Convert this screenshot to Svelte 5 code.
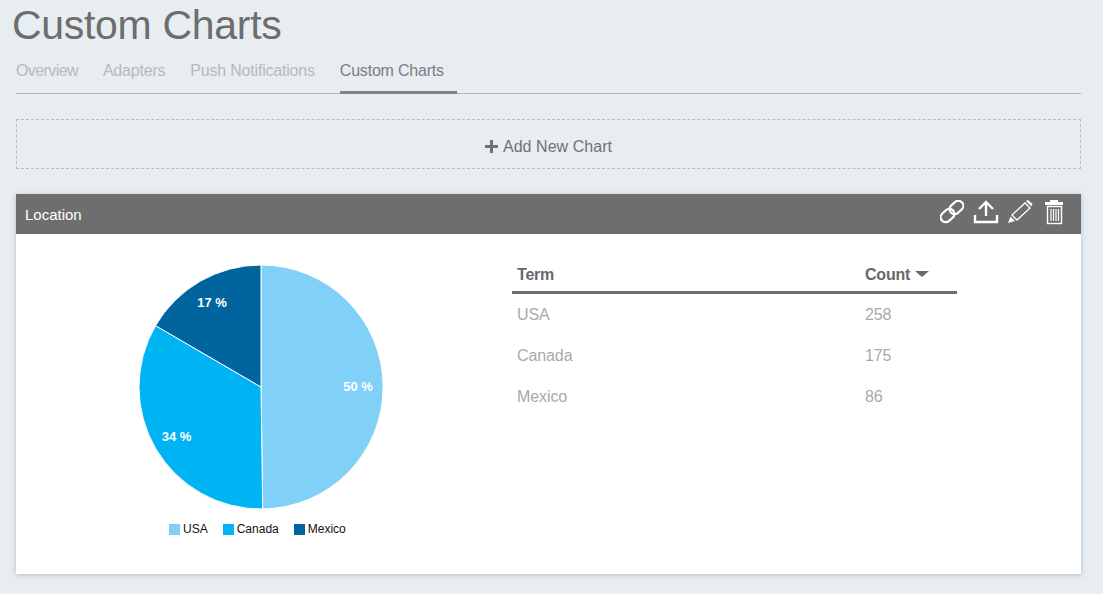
<script lang="ts">
	const tabs = ['Overview', 'Adapters', 'Push Notifications', 'Custom Charts'];
	const activeTab = 'Custom Charts';

	const rows = [
		{ term: 'USA', count: 258, color: '#81d0f7' },
		{ term: 'Canada', count: 175, color: '#00b3f2' },
		{ term: 'Mexico', count: 86, color: '#00649f' }
	];

	// pie centre and radius inside the svg
	const cx = 124;
	const cy = 124;
	const r = 122;

	function point(deg: number, radius = r) {
		const a = ((deg - 90) * Math.PI) / 180;
		return `${(cx + radius * Math.cos(a)).toFixed(2)} ${(cy + radius * Math.sin(a)).toFixed(2)}`;
	}

	const slices = [
		{ color: rows[0].color, from: 0, to: 179.2 },
		{ color: rows[1].color, from: 179.2, to: 300.2 },
		{ color: rows[2].color, from: 300.2, to: 360 }
	].map((s) => ({
		color: s.color,
		d: `M${cx} ${cy} L${point(s.from)} A${r} ${r} 0 ${s.to - s.from > 180 ? 1 : 0} 1 ${point(s.to)} Z`
	}));
</script>

<div class="page">
	<h1>Custom Charts</h1>

	<nav class="tabs">
		{#each tabs as tab}
			<span class="tab" class:active={tab === activeTab}>{tab}</span>
		{/each}
	</nav>

	<div class="add-chart">
		<svg class="plus" viewBox="0 0 13 13"><path d="M5 0h3v5h5v3H8v5H5V8H0V5h5z" /></svg>
		Add New Chart
	</div>

	<section class="card">
		<header class="card-head">
			<span class="card-title">Location</span>
			<div class="actions">
				<svg width="24" height="26" viewBox="0 0 24 26" fill="none" stroke="#fff" stroke-width="2.2">
					<g transform="rotate(-42 12 11.5)">
						<rect x="10.5" y="6.5" width="15" height="10" rx="5" />
						<rect x="-1.5" y="6.5" width="15" height="10" rx="5" />
					</g>
				</svg>
				<svg width="26" height="26" viewBox="0 0 26 26" fill="none" stroke="#fff" stroke-width="2.4">
					<path d="M13 16V2M6 9l7-7 7 7" />
					<path d="M2 15v7h22v-7" />
				</svg>
				<svg width="26" height="26" viewBox="0 0 26 26" fill="none" stroke="#fff" stroke-width="1.3">
					<path d="M4 15L17 3l5 5L9 20z" />
					<path d="M0 23l2.5-6.5L7 21z" fill="#fff" stroke="none" />
					<path d="M18 1l2-1 4.5 4-1 2.5z" fill="#fff" stroke="none" />
				</svg>
				<svg width="22" height="26" viewBox="0 0 22 26" fill="none" stroke="#fff">
					<path d="M7 1h8" stroke-width="2" />
					<path d="M2 3.5h18" stroke-width="3" />
					<rect x="4.5" y="6.5" width="14" height="17" stroke-width="1.4" />
					<path d="M8 9v12M10.5 9v12M13 9v12M15.5 9v12" stroke-width="1.2" />
				</svg>
			</div>
		</header>

		<div class="card-body">
			<div class="chart">
				<svg class="pie" width="248" height="248" viewBox="0 0 248 248">
					{#each slices as s}
						<path d={s.d} fill={s.color} stroke="#fff" stroke-width="1" />
					{/each}
					<text x="221" y="128">50 %</text>
					<text x="39.5" y="178">34 %</text>
					<text x="75" y="44">17 %</text>
				</svg>
				<div class="legend">
					{#each rows as row}
						<span class="legend-item"><i style="background:{row.color}"></i>{row.term}</span>
					{/each}
				</div>
			</div>

			<table>
				<thead>
					<tr>
						<th>Term</th>
						<th class="count">Count <span class="caret"></span></th>
					</tr>
				</thead>
				<tbody>
					{#each rows as row}
						<tr>
							<td>{row.term}</td>
							<td class="count">{row.count}</td>
						</tr>
					{/each}
				</tbody>
			</table>
		</div>
	</section>
</div>

<style>
	:global(body) {
		margin: 0;
		background: #e8edf2;
	}

	.page {
		height: 594px;
		box-sizing: border-box;
		overflow: hidden;
		padding: 0 22px 0 16px;
		font-family: "Liberation Sans", Arial, sans-serif;
	}

	h1 {
		margin: 0 0 0 -4px;
		height: 51px;
		font-size: 41px;
		line-height: 50px;
		font-weight: 400;
		color: #6d6d6d;
		letter-spacing: -0.3px;
	}

	.tabs {
		display: flex;
		gap: 25px;
		height: 43px;
		box-sizing: border-box;
		border-bottom: 1px solid #b4b6ba;
	}

	.tab {
		height: 42px;
		box-sizing: border-box;
		padding-top: 10px;
		font-size: 16px;
		line-height: 19px;
		color: #b7b9bd;
		letter-spacing: -0.2px;
	}

	.tab:first-child {
		letter-spacing: -0.6px;
	}

	.tab.active {
		height: 43px;
		padding-right: 13px;
		color: #7a7c82;
		border-bottom: 3px solid #808286;
	}

	.add-chart {
		display: flex;
		align-items: center;
		justify-content: center;
		gap: 5px;
		height: 50px;
		box-sizing: border-box;
		margin-top: 25px;
		padding-top: 5px;
		border: 1px dashed #b9bcc0;
		font-size: 16px;
		color: #6f7278;
		letter-spacing: 0.05px;
	}

	.plus {
		width: 13px;
		height: 13px;
		fill: #6f7278;
	}

	.card {
		margin-top: 25px;
		height: 380px;
		background: #fff;
		box-shadow: 0 1px 5px rgba(90, 100, 110, 0.35);
	}

	.card-head {
		display: flex;
		align-items: center;
		justify-content: space-between;
		height: 40px;
		padding: 0 16px 0 9px;
		background: #6e6e6e;
	}

	.card-title {
		font-size: 15px;
		color: #fff;
	}

	.actions {
		display: flex;
		align-items: flex-start;
		gap: 9px;
		margin-bottom: 2px;
	}

	.card-body {
		display: flex;
		align-items: flex-start;
	}

	.chart {
		width: 248px;
		margin: 29px 0 0 121px;
	}

	.pie {
		display: block;
	}

	.pie text {
		font-size: 13px;
		font-weight: 700;
		fill: #fff;
		text-anchor: middle;
	}

	.legend {
		display: flex;
		gap: 15px;
		margin-top: 11px;
		padding-left: 32px;
		font-size: 12px;
		line-height: 14px;
		color: #111;
	}

	.legend-item {
		display: flex;
		align-items: center;
		gap: 3px;
	}

	.legend-item i {
		width: 11px;
		height: 11px;
	}

	table {
		width: 445px;
		margin: 21px 0 0 127px;
		border-collapse: collapse;
		font-size: 16px;
	}

	th {
		height: 37px;
		padding: 4px 5px 0;
		box-sizing: border-box;
		border-bottom: 3px solid #6e6e6e;
		text-align: left;
		font-weight: 700;
		color: #66686c;
		letter-spacing: -0.2px;
	}

	td {
		height: 41px;
		box-sizing: border-box;
		padding: 4px 5px 0;
		color: #a9a9ad;
		letter-spacing: -0.1px;
	}

	.count {
		width: 97px;
	}

	.caret {
		display: inline-block;
		margin-left: 1px;
		vertical-align: 3px;
		border-left: 7.5px solid transparent;
		border-right: 7.5px solid transparent;
		border-top: 6px solid #66686c;
	}
</style>
